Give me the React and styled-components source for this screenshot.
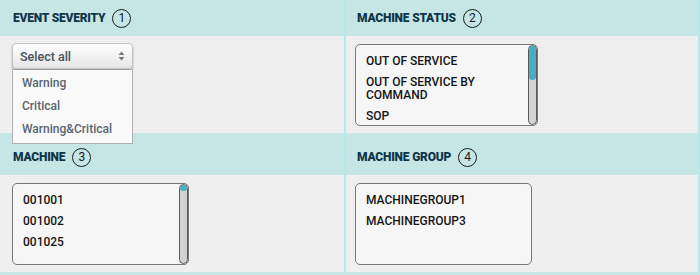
import React from "react";
import styled, { createGlobalStyle } from "styled-components";

const GlobalStyle = createGlobalStyle`
  html, body {
    margin: 0;
    padding: 0;
    background: #c6e6e6;
    font-family: Roboto, "Liberation Sans", Arial, sans-serif;
  }
`;

const Board = styled.div`
  width: 700px;
  height: 275px;
  display: grid;
  grid-template-columns: 344px 356px;
  grid-template-rows: 133px 139px;
  background: #c6e6e6;
  overflow: hidden;
`;

const Panel = styled.div`
  position: relative;
  display: flex;
  flex-direction: column;
  border-left: ${(p) => (p.$right ? "2px solid #b2ebeb" : "0")};
  border-right: ${(p) => (p.$right ? "2px solid #b2ebeb" : "0")};
  z-index: ${(p) => (p.$top ? 2 : 1)};
`;

const Header = styled.div`
  height: ${(p) => p.$height}px;
  padding: ${(p) => p.$padTop}px 0 0 ${(p) => p.$padLeft}px;
  box-sizing: border-box;
  display: flex;
  align-items: center;
  gap: 7px;
  flex-shrink: 0;
`;

const Title = styled.span`
  font-size: 12px;
  font-weight: 900;
  color: #0f3648;
  letter-spacing: -0.2px;
`;

const Badge = styled.span`
  width: 17px;
  height: 17px;
  border: 1.2px solid #1a1a1a;
  border-radius: 50%;
  display: flex;
  align-items: center;
  justify-content: center;
  font-size: 12px;
  color: #1a1a1a;
`;

const Body = styled.div`
  flex: 1;
  position: relative;
  padding: ${(p) => p.$padTop}px 0 0 ${(p) => p.$padLeft}px;
  background-color: #eeeeee;
  background-image: repeating-linear-gradient(
    0deg,
    #f1f1f1 0px,
    #f1f1f1 1px,
    #ececec 1px,
    #ececec 2px
  );
`;

const SelectWrap = styled.div`
  position: relative;
  width: 121px;
`;

const SelectBox = styled.div`
  height: 26px;
  box-sizing: border-box;
  border: 1px solid #c2c2c2;
  border-radius: 4px;
  background: linear-gradient(#fefefe, #e6e6e6);
  box-shadow: 0 2px 2px rgba(0, 0, 0, 0.35);
  display: flex;
  align-items: center;
  justify-content: space-between;
  padding: 0 7px 0 7px;
  font-size: 12.5px;
  font-weight: 500;
  color: #46515d;
`;

const Arrows = styled.svg`
  width: 7px;
  height: 10px;
`;

const Menu = styled.ul`
  position: absolute;
  top: 27px;
  left: 0;
  width: 121px;
  box-sizing: border-box;
  margin: 0;
  padding: 2px 0 2px;
  list-style: none;
  background: #f9f9f9;
  border: 1px solid #b0b0b0;
  border-top: 0;
`;

const MenuItem = styled.li`
  height: 23px;
  line-height: 23px;
  padding-left: 9px;
  font-size: 12px;
  font-weight: 500;
  color: #5a6571;
`;

const ListBox = styled.div`
  position: relative;
  width: ${(p) => p.$width}px;
  height: 82px;
  box-sizing: border-box;
  border: 1px solid #777;
  border-radius: 5px;
  background: #f6f6f6;
  padding: 6px ${(p) => (p.$scroll ? 14 : 6)}px 0 10px;
  overflow: hidden;
`;

const Option = styled.div`
  padding: 4px 0;
  line-height: 13px;
  font-size: 12px;
  font-weight: 500;
  color: #151515;
`;

const Track = styled.div`
  position: absolute;
  top: 0;
  right: 0;
  bottom: 0;
  width: 9px;
  box-sizing: border-box;
  border: 1px solid #5a5a5a;
  border-radius: 5px;
  background: #d3d3d3;
  overflow: hidden;
`;

const Thumb = styled.div`
  height: ${(p) => p.$size}px;
  background: #4badc3;
  border-radius: 4px;
`;

const SelectArrows = () => (
  <Arrows viewBox="0 0 7 10">
    <path d="M3.5 0.5 L6.5 4 H0.5 Z" fill="#7a7a7a" />
    <path d="M3.5 9.5 L6.5 6 H0.5 Z" fill="#7a7a7a" />
  </Arrows>
);

const ScrollList = ({ width, items, thumb }) => (
  <ListBox $width={width} $scroll={thumb != null}>
    {items.map((it) => (
      <Option key={it}>{it}</Option>
    ))}
    {thumb != null && (
      <Track>
        <Thumb $size={thumb} />
      </Track>
    )}
  </ListBox>
);

export default function App() {
  return (
    <>
      <GlobalStyle />
      <Board>
        <Panel $top>
          <Header $height={36} $padTop={0} $padLeft={13}>
            <Title>EVENT SEVERITY</Title>
            <Badge>1</Badge>
          </Header>
          <Body $padTop={7} $padLeft={12}>
            <SelectWrap>
              <SelectBox>
                <span>Select all</span>
                <SelectArrows />
              </SelectBox>
              <Menu>
                <MenuItem>Warning</MenuItem>
                <MenuItem>Critical</MenuItem>
                <MenuItem>Warning&amp;Critical</MenuItem>
              </Menu>
            </SelectWrap>
          </Body>
        </Panel>

        <Panel $right>
          <Header $height={36} $padTop={0} $padLeft={11}>
            <Title>MACHINE STATUS</Title>
            <Badge>2</Badge>
          </Header>
          <Body $padTop={8} $padLeft={9}>
            <ScrollList
              width={183}
              thumb={34}
              items={["OUT OF SERVICE", "OUT OF SERVICE BY COMMAND", "SOP"]}
            />
          </Body>
        </Panel>

        <Panel>
          <Header $height={42} $padTop={6} $padLeft={13}>
            <Title>MACHINE</Title>
            <Badge>3</Badge>
          </Header>
          <Body $padTop={8} $padLeft={12}>
            <ScrollList
              width={177}
              thumb={6}
              items={["001001", "001002", "001025"]}
            />
          </Body>
        </Panel>

        <Panel $right>
          <Header $height={42} $padTop={6} $padLeft={11}>
            <Title>MACHINE GROUP</Title>
            <Badge>4</Badge>
          </Header>
          <Body $padTop={8} $padLeft={9}>
            <ScrollList width={177} items={["MACHINEGROUP1", "MACHINEGROUP3"]} />
          </Body>
        </Panel>
      </Board>
    </>
  );
}
